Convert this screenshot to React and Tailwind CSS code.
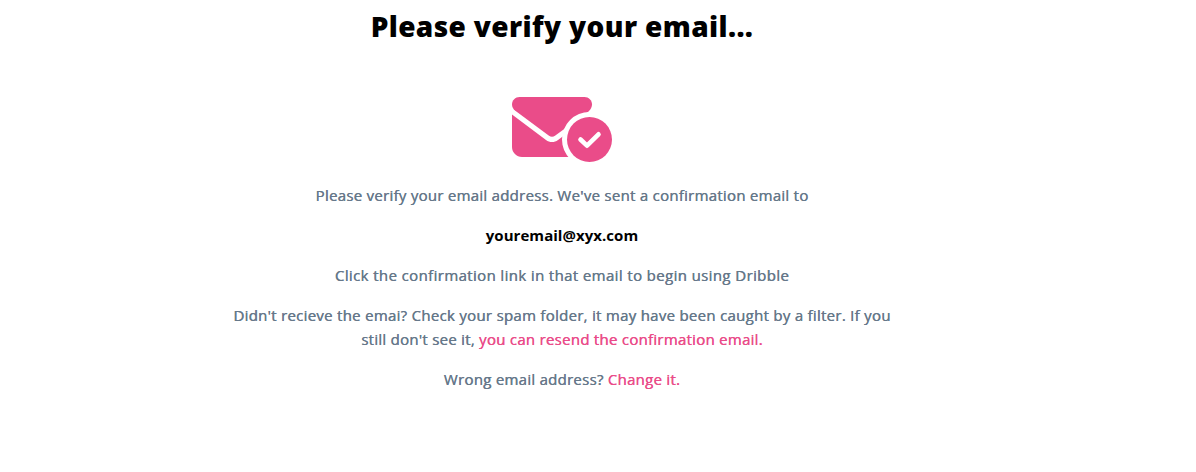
function VerifiedMailIcon() {
  return (
    <svg className="h-[65px] w-[100px]" viewBox="0 0 100 65" fill="none" aria-hidden="true">
      <path
        d="M7.5 0H72.5C76.700 0 80 3.300 80 7.500C80 10 78.800 12.300 76.700 14.300L43 38.800C41.200 40.100 38.800 40.100 37 38.800L3 13.500C1 12 0 9.900 0 7.500C0 3.300 3.300 0 7.500 0Z"
        fill="#ea4c89"
      />
      <path
        d="M0 17.500L34 43C37.600 45.700 42.400 45.700 46 43L80 17.500V60H10C4.500 60 0 55.500 0 50Z"
        fill="#ea4c89"
      />
      <circle cx="77.500" cy="42.500" r="27.500" fill="white" />
      <circle cx="77.500" cy="42.500" r="22.500" fill="#ea4c89" />
      <path d="M68.500 42.500L75 48.700L86.500 37.300" stroke="white" strokeWidth="4.600" strokeLinecap="round" strokeLinejoin="round" />
    </svg>
  );
}

export default function App() {
  return (
    <main className="h-[472px] w-full overflow-hidden bg-white font-['Open_Sans',sans-serif] text-[15px] leading-6 text-[#66788a]">
      <div className="flex w-[1124px] flex-col items-center whitespace-nowrap">
        <h1 className="mt-[2px] text-[28px] leading-[48px] font-extrabold tracking-[0.38px] text-black">
          Please verify your email...
        </h1>
        <div className="mt-[47px] flex">
          <VerifiedMailIcon />
        </div>
        <div className="mt-[21px] flex flex-col items-center gap-4 text-center tracking-[0.27px] [text-shadow:0.3px_0_0_currentColor]">
          <p>Please verify your email address. We've sent a confirmation email to</p>
          <p className="font-bold tracking-[0.05px] text-black [text-shadow:none]">youremail@xyx.com</p>
          <p className="tracking-[0.38px]">Click the confirmation link in that email to begin using Dribble</p>
          <p>
            <span className="tracking-[0.285px]">
              Didn't recieve the emai? Check your spam folder, it may have been caught by a filter. If you
            </span>
            <br />
            still don't see it, <a className="text-[#ea4c89] [text-shadow:0.3px_0_0_currentColor]">you can resend the confirmation email.</a>
          </p>
          <p>
            Wrong email address? <a className="text-[#ea4c89] [text-shadow:0.3px_0_0_currentColor]">Change it.</a>
          </p>
        </div>
      </div>
    </main>
  );
}
